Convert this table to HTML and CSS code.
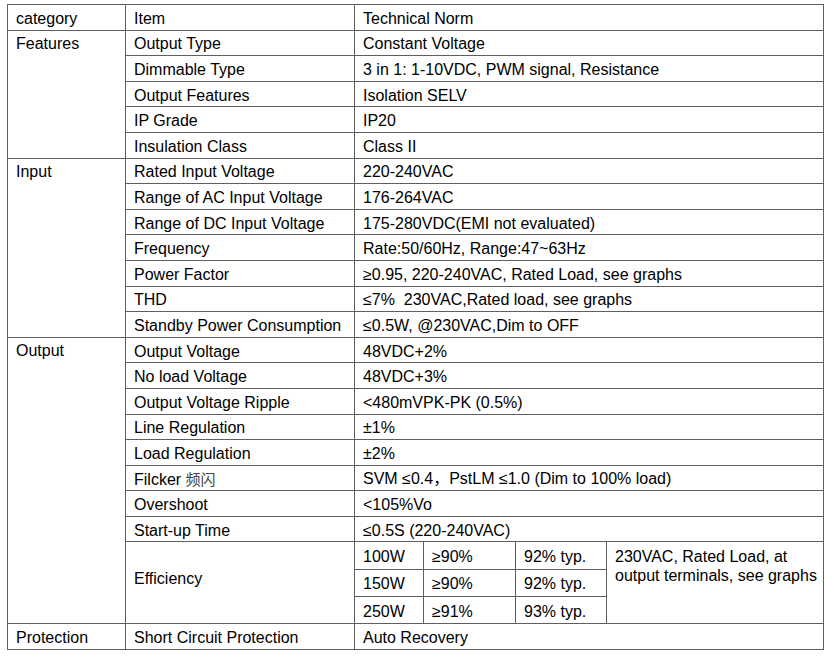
FILE: index.html
```html
<!DOCTYPE html>
<html>
<head>
<meta charset="utf-8">
<link rel="stylesheet" href="styles.css">
</head>
<body>
<table class="spec">
  <colgroup>
    <col class="c-cat"><col class="c-item"><col class="c-a"><col class="c-b"><col class="c-c"><col class="c-d">
  </colgroup>
  <tbody>
    <tr><td>category</td><td>Item</td><td colspan="4">Technical Norm</td></tr>
    <tr><td class="cat" rowspan="5">Features</td><td>Output Type</td><td colspan="4">Constant Voltage</td></tr>
    <tr><td>Dimmable Type</td><td colspan="4">3 in 1: 1-10VDC, PWM signal, Resistance</td></tr>
    <tr><td>Output Features</td><td colspan="4">Isolation SELV</td></tr>
    <tr><td>IP Grade</td><td colspan="4">IP20</td></tr>
    <tr><td>Insulation Class</td><td colspan="4">Class II</td></tr>
    <tr><td class="cat" rowspan="7">Input</td><td>Rated Input Voltage</td><td colspan="4">220-240VAC</td></tr>
    <tr><td>Range of AC Input Voltage</td><td colspan="4">176-264VAC</td></tr>
    <tr><td>Range of DC Input Voltage</td><td colspan="4">175-280VDC(EMI not evaluated)</td></tr>
    <tr><td>Frequency</td><td colspan="4">Rate:50/60Hz, Range:47~63Hz</td></tr>
    <tr><td>Power Factor</td><td colspan="4">≥0.95, 220-240VAC, Rated Load, see graphs</td></tr>
    <tr><td>THD</td><td colspan="4">≤7%&nbsp; 230VAC,Rated load, see graphs</td></tr>
    <tr><td>Standby Power Consumption</td><td colspan="4">≤0.5W, @230VAC,Dim to OFF</td></tr>
    <tr><td class="cat" rowspan="11">Output</td><td>Output Voltage</td><td colspan="4">48VDC+2%</td></tr>
    <tr><td>No load Voltage</td><td colspan="4">48VDC+3%</td></tr>
    <tr><td>Output Voltage Ripple</td><td colspan="4">&lt;480mVPK-PK (0.5%)</td></tr>
    <tr><td>Line Regulation</td><td colspan="4">±1%</td></tr>
    <tr><td>Load Regulation</td><td colspan="4">±2%</td></tr>
    <tr><td>Filcker <span class="cjk">频闪</span></td><td colspan="4">SVM ≤0.4，PstLM ≤1.0 (Dim to 100% load)</td></tr>
    <tr><td>Overshoot</td><td colspan="4">&lt;105%Vo</td></tr>
    <tr><td>Start-up Time</td><td colspan="4">≤0.5S (220-240VAC)</td></tr>
    <tr class="eff"><td class="eff-label" rowspan="3">Efficiency</td><td>100W</td><td>≥90%</td><td>92% typ.</td><td class="note" rowspan="3">230VAC, Rated Load, at output terminals, see graphs</td></tr>
    <tr class="eff"><td>150W</td><td>≥90%</td><td>92% typ.</td></tr>
    <tr class="eff"><td>250W</td><td>≥91%</td><td>93% typ.</td></tr>
    <tr><td>Protection</td><td>Short Circuit Protection</td><td colspan="4">Auto Recovery</td></tr>
  </tbody>
</table>
</body>
</html>
```

FILE: styles.css
```css
html, body {
  margin: 0;
  padding: 0;
  background: #ffffff;
}

body {
  padding: 4px 0 0 7px;
  font-family: "Liberation Sans", Arial, "Noto Sans CJK SC", sans-serif;
  font-size: 16px;
  color: #000;
}

.spec {
  border-collapse: collapse;
  table-layout: fixed;
  width: 816px;
}

.c-cat { width: 118px; }
.c-item { width: 229px; }
.c-a { width: 69px; }
.c-b { width: 92px; }
.c-c { width: 91px; }
.c-d { width: 217px; }

.spec td {
  border: 1px solid #5f5f5f;
  height: 25.6px;
  padding: 3px 0 0 8px;
  line-height: 18px;
  vertical-align: middle;
  white-space: nowrap;
  box-sizing: border-box;
}

.spec td.cat {
  vertical-align: top;
  padding-top: 4px;
}

.spec tr.eff td {
  height: 27.3px;
}

.spec td.eff-label {
  padding-top: 0;
  padding-bottom: 8px;
}

.spec td.note {
  vertical-align: top;
  white-space: normal;
  padding-top: 5px;
  line-height: 19px;
}

.cjk {
  font-family: "Noto Sans CJK SC", sans-serif;
  font-size: 15px;
  color: #444;
}
```
